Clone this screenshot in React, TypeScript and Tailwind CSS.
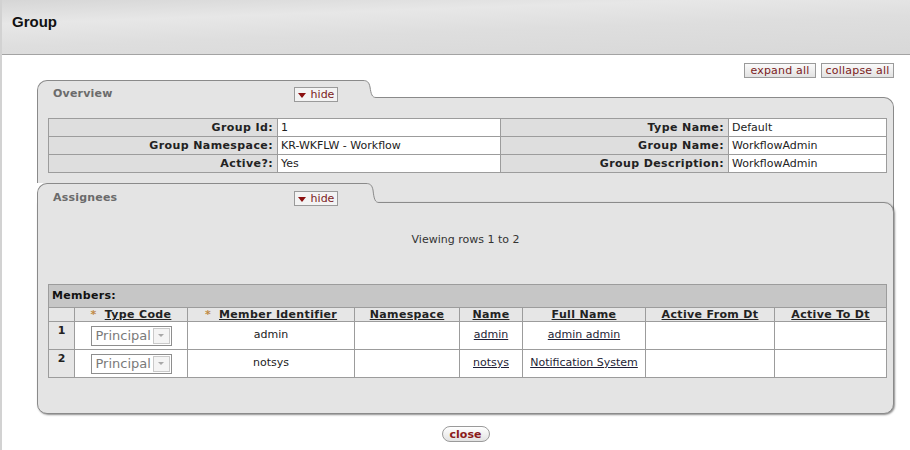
import React from "react";

const PANEL = "#e4e4e4";
const EDGE = "#8a8a8a";

function Shoulder({ h, back }: { h: number; back: string }) {
  const curve = `M0 0.5 H3 C7 0.5 9 2 10 7 C11 ${h - 4} 12 ${h - 0.5} 16 ${h - 0.5}`;
  return (
    <svg width="16" height={h} className="block shrink-0">
      <rect width="16" height={h} fill={back} />
      <path d={`${curve} V${h} H0 Z`} fill={PANEL} />
      <path d={curve} fill="none" stroke={EDGE} strokeWidth="1" />
    </svg>
  );
}

function HideButton() {
  return (
    <span className="flex h-[15px] w-[44px] items-center justify-center gap-[5px] border border-[#9a9a9a] bg-[#f3f3f3] text-[11px] leading-[13px] text-[#7b1c1c]">
      <span className="mt-[1px] h-0 w-0 border-l-[4px] border-r-[4px] border-t-[5px] border-l-transparent border-r-transparent border-t-[#8b1010]" />
      hide
    </span>
  );
}

function Label({ children }: { children: React.ReactNode }) {
  return (
    <td className="border border-[#9c9c9c] bg-[#dedede] px-[4px] text-right font-bold leading-[15px] tracking-[0.4px]">
      {children}
    </td>
  );
}

function Value({ children }: { children: React.ReactNode }) {
  return (
    <td className="border border-[#9c9c9c] bg-white px-[3px] leading-[15px]">{children}</td>
  );
}

function Head({ children, req }: { children: React.ReactNode; req?: boolean }) {
  return (
    <th className="border border-[#9c9c9c] bg-[#e6e6e6] p-0 text-center font-bold leading-[13px] tracking-[0.35px]">
      {req && <span className="mr-[8px] text-[#c08a45]">*</span>}
      <span className="underline">{children}</span>
    </th>
  );
}

function PrincipalSelect() {
  return (
    <div className="mx-auto flex h-[20px] w-[81px] items-center border border-[#8e8e8e] bg-white">
      <span className="flex-1 pl-[4px] text-[13px] leading-[16px] text-[#7a7a7a]">Principal</span>
      <span className="mr-[1px] flex h-[16px] w-[17px] items-center justify-center border border-[#c9c9c9] bg-[#f4f4f4]">
        <span className="h-0 w-0 border-l-[3px] border-r-[3px] border-t-[3px] border-l-transparent border-r-transparent border-t-[#a8a8a8]" />
      </span>
    </div>
  );
}

const members = [
  { n: 1, id: "admin", name: "admin", full: "admin admin" },
  { n: 2, id: "notsys", name: "notsys", full: "Notification System" },
];

export default function App() {
  return (
    <div className="h-[450px] w-[910px] overflow-hidden border-l-2 border-[#d2d2d2] bg-white font-['DejaVu_Sans',Verdana,sans-serif] text-[11px] text-[#222]">
      {/* Title bar */}
      <div className="h-[55px] border-b border-[#a3a3a3] bg-[linear-gradient(178deg,#d6d6d6_0%,#e7e7e7_28%,#dedede_55%,#d8d8d8_100%)] pl-[10px] pt-[13px]">
        <h1 className="font-['Liberation_Sans',Arial,sans-serif] text-[15px] font-bold leading-[17px] text-[#111]">
          Group
        </h1>
      </div>

      {/* Expand / collapse */}
      <div className="mt-[8px] flex justify-end gap-[5px] pr-[16px]">
        <button className="h-[15px] w-[72px] border border-[#9a9a9a] bg-[linear-gradient(#fafafa,#e2e2e2)] text-[11px] leading-[13px] tracking-[0.2px] text-[#7b1c1c]">
          expand all
        </button>
        <button className="h-[15px] w-[73px] border border-[#9a9a9a] bg-[linear-gradient(#fafafa,#e2e2e2)] text-[11px] leading-[13px] tracking-[0.2px] text-[#7b1c1c]">
          collapse all
        </button>
      </div>

      <div className="ml-[35px] mr-[16px] mt-[2px]">
        {/* Overview */}
        <div className="flex h-[17px] items-start">
          <div className="relative z-10 flex h-[18px] w-[323px] shrink-0 items-start rounded-tl-[10px] border-l border-t border-[#8a8a8a] bg-[#e4e4e4] pl-[15px] pt-[6px]">
            <span className="w-[241px] shrink-0 font-bold leading-[13px] tracking-[0.2px] text-[#6b6b6b]">Overview</span>
            <HideButton />
          </div>
          <div className="relative z-10">
            <Shoulder h={18} back="#ffffff" />
          </div>
        </div>
        <div className="rounded-tr-[10px] border-l border-r border-t border-[#8a8a8a] bg-[#e4e4e4] pb-[10px] pl-[10px] pt-[20px]">
          <table className="w-[839px] table-fixed border-collapse">
            <colgroup>
              <col className="w-[229px]" />
              <col className="w-[223px]" />
              <col className="w-[228px]" />
              <col className="w-[158px]" />
            </colgroup>
            <tbody>
              <tr className="h-[18px]">
                <Label>Group Id:</Label>
                <Value>1</Value>
                <Label>Type Name:</Label>
                <Value>Default</Value>
              </tr>
              <tr className="h-[18px]">
                <Label>Group Namespace:</Label>
                <Value>KR-WKFLW - Workflow</Value>
                <Label>Group Name:</Label>
                <Value>WorkflowAdmin</Value>
              </tr>
              <tr className="h-[18px]">
                <Label>Active?:</Label>
                <Value>Yes</Value>
                <Label>Group Description:</Label>
                <Value>WorkflowAdmin</Value>
              </tr>
            </tbody>
          </table>
        </div>

        {/* Assignees */}
        <div className="flex h-[19px] items-start">
          <div className="relative z-10 flex h-[20px] w-[326px] shrink-0 items-start rounded-tl-[10px] border-l border-t border-[#8a8a8a] bg-[#e4e4e4] pl-[15px] pt-[7px]">
            <span className="w-[241px] shrink-0 font-bold leading-[13px] tracking-[0.2px] text-[#6b6b6b]">Assignees</span>
            <HideButton />
          </div>
          <div className="relative z-10">
            <Shoulder h={20} back="#e4e4e4" />
          </div>
          <div className="h-[29px] flex-1 border-r border-[#8a8a8a] bg-[#e4e4e4]" />
        </div>
        <div className="relative rounded-b-[10px] rounded-tr-[10px] border border-[#8a8a8a] bg-[#e4e4e4] pb-[35px] pl-[10px] pt-[30px] shadow-[1px_1px_2px_rgba(0,0,0,0.45)]">
          <p className="pr-[10px] text-center leading-[14px] text-[#333]">Viewing rows 1 to 2</p>
          <table className="mt-[37px] w-[839px] table-fixed border-collapse">
            <colgroup>
              <col className="w-[26px]" />
              <col className="w-[113px]" />
              <col className="w-[167px]" />
              <col className="w-[105px]" />
              <col className="w-[63px]" />
              <col className="w-[123px]" />
              <col className="w-[129px]" />
              <col className="w-[112px]" />
            </colgroup>
            <tbody>
              <tr className="h-[23px]">
                <td colSpan={8} className="border border-[#9c9c9c] bg-[#c6c6c6] pl-[3px] font-bold leading-[14px] tracking-[0.3px] text-[#111]">
                  Members:
                </td>
              </tr>
              <tr className="h-[14px]">
                <th className="border border-[#9c9c9c] bg-[#e6e6e6] p-0" />
                <Head req>Type Code</Head>
                <Head req>Member Identifier</Head>
                <Head>Namespace</Head>
                <Head>Name</Head>
                <Head>Full Name</Head>
                <Head>Active From Dt</Head>
                <Head>Active To Dt</Head>
              </tr>
              {members.map((m) => (
                <tr key={m.n} className="h-[28px]">
                  <td className="border border-[#9c9c9c] bg-[#e6e6e6] pt-[2px] text-center align-top font-bold leading-[13px]">
                    {m.n}
                  </td>
                  <td className="border border-[#9c9c9c] bg-white p-0 align-middle">
                    <PrincipalSelect />
                  </td>
                  <td className="border border-[#9c9c9c] bg-white text-center">{m.id}</td>
                  <td className="border border-[#9c9c9c] bg-white" />
                  <td className="border border-[#9c9c9c] bg-white text-center">
                    <a className="text-[#1e1e36] underline">{m.name}</a>
                  </td>
                  <td className="border border-[#9c9c9c] bg-white text-center">
                    <a className="text-[#1e1e36] underline">{m.full}</a>
                  </td>
                  <td className="border border-[#9c9c9c] bg-white" />
                  <td className="border border-[#9c9c9c] bg-white" />
                </tr>
              ))}
            </tbody>
          </table>
        </div>

        {/* Close */}
        <div className="mt-[12px] flex justify-center">
          <button className="h-[16px] w-[48px] rounded-full border border-[#9a9a9a] bg-[linear-gradient(#ffffff,#e2e2e2)] text-[11px] font-bold leading-[13px] text-[#8b1a1a]">
            close
          </button>
        </div>
      </div>
    </div>
  );
}
